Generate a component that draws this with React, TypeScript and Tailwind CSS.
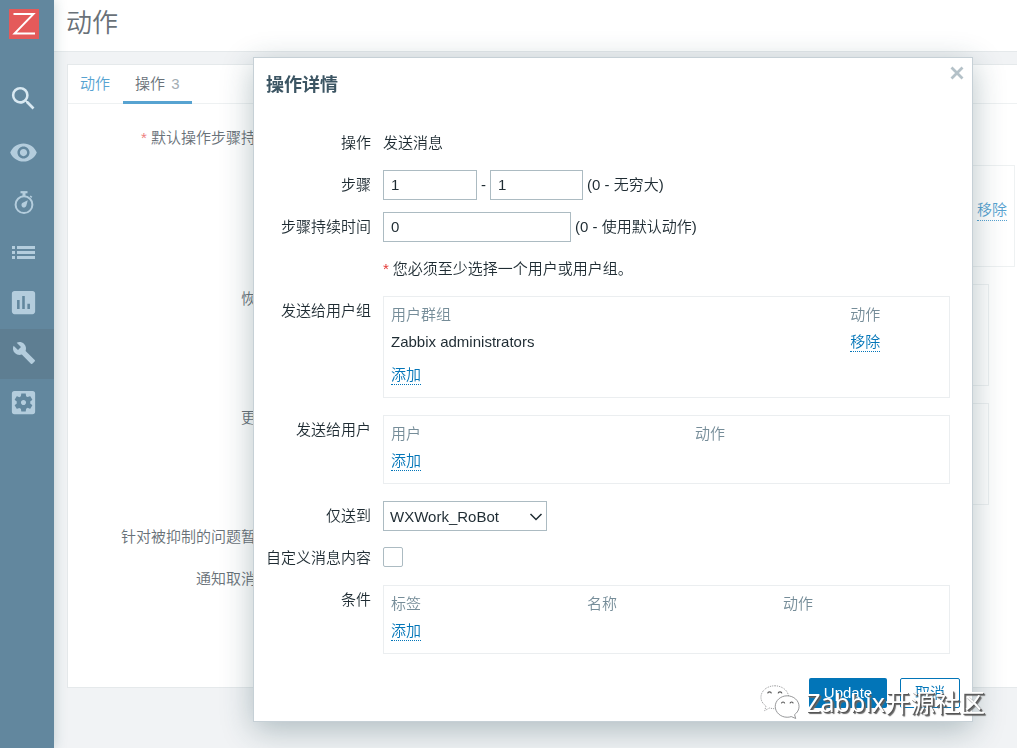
import React from 'react';
import {
  MdAssessment,
  MdBuild,
  MdRemoveRedEye,
  MdSearch,
  MdSettingsApplications
} from 'react-icons/md';

interface FormRowProps {
  label?: string;
  htmlFor?: string;
  children: React.ReactNode;
}

interface ListTableProps {
  columns: { title: string; className: string }[];
  children?: React.ReactNode;
}

const TimerIcon: React.FC = () => (
  <svg width="20" height="24" viewBox="0 0 20 24" fill="none" aria-hidden="true">
    <path d="M6.5 1.2h7" stroke="currentColor" strokeWidth="2.2" />
    <path d="M10 2v3" stroke="currentColor" strokeWidth="3" />
    <path d="M16.2 5l1.6 1.4" stroke="currentColor" strokeWidth="1.6" />
    <circle cx="10" cy="13.7" r="8.4" stroke="currentColor" strokeWidth="2" />
    <path d="M13.8 9.2l-1.5 5.6a2.5 2.5 0 1 1-3.6-3z" fill="currentColor" />
  </svg>
);

const ListIcon: React.FC = () => (
  <svg width="23" height="14" viewBox="0 0 23 14" fill="currentColor" aria-hidden="true">
    <path d="M0 0h3v3H0zM5 0h18v3H5zM0 5h3v3H0zM5 5h18v3H5zM0 10h3v3H0zM5 10h18v3H5z" />
  </svg>
);

const navItems = [
  { name: 'Monitoring', icon: <MdRemoveRedEye size={29} />, active: false },
  { name: 'Services', icon: <TimerIcon />, active: false },
  { name: 'Inventory', icon: <ListIcon />, active: false },
  { name: 'Reports', icon: <MdAssessment size={31} />, active: false },
  { name: 'Configuration', icon: <MdBuild size={24} />, active: true },
  { name: 'Administration', icon: <MdSettingsApplications size={31} />, active: false }
];

const Sidebar: React.FC = () => (
  <aside className="relative z-10 flex w-[54px] shrink-0 flex-col bg-[#62879e] text-[#b4cddd] shadow-[0_0_12px_rgba(40,90,100,0.25)]">
    <a href="#home" aria-label="Zabbix" className="mt-[9px] ml-[9px] block size-[30px]">
      <svg width="30" height="30" viewBox="0 0 30 30" aria-hidden="true">
        <path d="M0 0h30v30H0z" fill="#e45a5a" />
        <path d="M4.5 5h20L5.5 24.5H26" fill="none" stroke="#fff" strokeWidth="1.9" />
      </svg>
    </a>
    <button aria-label="Search" className="mt-[34px] flex h-[50px] w-[47px] items-center justify-center text-[#d9e9f2]">
      <MdSearch size={31} />
    </button>
    <nav className="mt-1.5">
      {navItems.map((item) => (
        <a
          key={item.name}
          href={`#${item.name.toLowerCase()}`}
          aria-label={item.name}
          className={`flex h-[50px] items-center justify-center pr-[7px] pb-[3px] ${item.active ? 'bg-[#5e7e92]' : ''}`}
        >
          {item.icon}
        </a>
      ))}
    </nav>
  </aside>
);

const ActionPage: React.FC = () => (
  <main className="flex min-w-0 flex-1 flex-col overflow-hidden bg-[#f1f3f5] text-[#697178]">
    <header className="flex h-[52px] items-center border-b border-[#e5e9eb] bg-white px-3 pb-1">
      <h1 className="text-[26px]">动作</h1>
    </header>
    <section className="mt-3 -mr-3 ml-[13px] border border-[#e5e9eb] bg-white pb-[93px]">
      <div className="flex h-[39px] gap-px border-b border-[#eef1f2]">
        <a href="#action" className="px-3 pt-1 leading-[30px] text-[#57a3d1]">动作</a>
        <a href="#operations" className="h-[39px] border-b-3 border-[#57a3d1] px-3 pt-1 leading-[30px]">
          操作 <span className="ml-0.5 text-[#a3adb3]">3</span>
        </a>
      </div>
      <div className="grid grid-cols-[233px_1fr] gap-x-3 gap-y-3 pt-[19px] pr-[13px] text-right leading-[30px] whitespace-nowrap">
        <div><span className="text-[#ee8080]">*</span> 默认操作步骤持续时间</div>
        <div />
        <div>操作</div>
        <div className="mb-[5px] flex h-[102px] items-center justify-end border border-[#eef1f2] pr-[7px] pb-3">
          <button className="border-b border-dotted border-[#57a3d1] leading-5 text-[#57a3d1]">移除</button>
        </div>
        <div>恢复操作</div>
        <div className="mr-[26px] mb-[5px] h-[102px] border border-[#eef1f2]" />
        <div>更新操作</div>
        <div className="mr-[26px] mb-[5px] h-[102px] border border-[#eef1f2]" />
        <div>针对被抑制的问题暂停操作</div>
        <div />
        <div>通知取消的升级</div>
        <div />
      </div>
    </section>
  </main>
);

const FormRow: React.FC<FormRowProps> = ({ label, htmlFor, children }) => (
  <>
    {htmlFor ? (
      <label htmlFor={htmlFor} className="text-right leading-[30px]">{label}</label>
    ) : (
      <div className="text-right leading-[30px]">{label}</div>
    )}
    <div className="flex min-h-[30px] items-start gap-1 leading-[30px]">{children}</div>
  </>
);

const LinkButton: React.FC<{ children: React.ReactNode }> = ({ children }) => (
  <button type="button" className="border-b border-dotted border-[#0275b8] leading-[19px] text-[#0275b8]">
    {children}
  </button>
);

const ListTable: React.FC<ListTableProps> = ({ columns, children }) => (
  <div className="mb-[5px] w-full border border-[#ebeef0] px-[7px] pt-1 pb-[9px]">
    <table className="w-full table-fixed text-left leading-[27px]">
      <thead>
        <tr className="text-[#768d99]">
          {columns.map((column) => (
            <th key={column.title} className={`p-0 font-[350] ${column.className}`}>{column.title}</th>
          ))}
        </tr>
      </thead>
      <tbody>{children}</tbody>
    </table>
  </div>
);

const inputClass = 'h-[30px] border border-[#acbbc2] bg-white px-[7px] outline-none';

const OperationDialog: React.FC = () => (
  <form
    role="dialog"
    aria-labelledby="dialog-title"
    className="w-full max-w-[720px] border border-[#c6d0d6] bg-white px-3 pb-[13px] shadow-[0_8px_30px_rgba(35,70,80,0.32)]"
  >
    <div className="flex items-start justify-between">
      <h2 id="dialog-title" className="pt-3 text-[18px] leading-[30px] font-bold text-[#3c5563]">操作详情</h2>
      <button type="button" aria-label="Close" className="-mr-1 pt-2 text-[#b4c1c8]">
        <svg width="14" height="14" viewBox="0 0 14 14" fill="none" aria-hidden="true">
          <path d="M1.5 1.5l11 11M12.5 1.5l-11 11" stroke="currentColor" strokeWidth="2.8" />
        </svg>
      </button>
    </div>

    <div className="mt-7 grid grid-cols-[105px_1fr] gap-3 pr-2.5">
      <FormRow label="操作">发送消息</FormRow>
      <FormRow label="步骤" htmlFor="step-from">
        <input id="step-from" defaultValue="1" className={`w-[94px] ${inputClass}`} />
        <span>-</span>
        <input aria-label="步骤" defaultValue="1" className={`w-[93px] ${inputClass}`} />
        <span>(0 - 无穷大)</span>
      </FormRow>
      <FormRow label="步骤持续时间" htmlFor="duration">
        <input id="duration" defaultValue="0" className={`w-[188px] ${inputClass}`} />
        <span>(0 - 使用默认动作)</span>
      </FormRow>
      <FormRow>
        <span className="text-[#e33734]">*</span>
        <span>您必须至少选择一个用户或用户组。</span>
      </FormRow>
      <FormRow label="发送给用户组">
        <ListTable columns={[{ title: '用户群组', className: 'w-5/6' }, { title: '动作', className: '' }]}>
          <tr>
            <td className="p-0">Zabbix administrators</td>
            <td className="p-0"><LinkButton>移除</LinkButton></td>
          </tr>
          <tr>
            <td colSpan={2} className="p-0 pt-1.5"><LinkButton>添加</LinkButton></td>
          </tr>
        </ListTable>
      </FormRow>
      <FormRow label="发送给用户">
        <ListTable columns={[{ title: '用户', className: 'w-[304px]' }, { title: '动作', className: '' }]}>
          <tr>
            <td colSpan={2} className="p-0"><LinkButton>添加</LinkButton></td>
          </tr>
        </ListTable>
      </FormRow>
      <FormRow label="仅送到" htmlFor="media">
        <div className="relative">
          <select id="media" className="block h-[30px] w-[164px] appearance-none border border-[#acbbc2] bg-white px-1.5">
            <option>WXWork_RoBot</option>
          </select>
          <svg className="pointer-events-none absolute top-3 right-1" width="14" height="8" viewBox="0 0 14 8" fill="none" aria-hidden="true">
            <path d="M1.5 1l5.5 5.5L12.5 1" stroke="#1f2c33" strokeWidth="1.5" />
          </svg>
        </div>
      </FormRow>
      <FormRow label="自定义消息内容" htmlFor="custom">
        <input id="custom" type="checkbox" className="mt-1 size-5 appearance-none rounded-xs border border-[#acbbc2] bg-white" />
      </FormRow>
      <FormRow label="条件">
        <ListTable
          columns={[
            { title: '标签', className: 'w-[196px]' },
            { title: '名称', className: 'w-[196px]' },
            { title: '动作', className: '' }
          ]}
        >
          <tr>
            <td colSpan={3} className="p-0"><LinkButton>添加</LinkButton></td>
          </tr>
        </ListTable>
      </FormRow>
    </div>

    <div className="mt-[19px] flex justify-end gap-[13px]">
      <button type="button" className="h-[30px] w-[78px] rounded-xs bg-[#0275b8] text-white">Update</button>
      <button type="button" className="h-[30px] w-[60px] rounded-xs border border-[#0275b8] bg-white text-[#0275b8]">取消</button>
    </div>
  </form>
);

const Watermark: React.FC = () => (
  <div className="pointer-events-none fixed right-8 bottom-7 z-30 flex items-center gap-1.5">
    <svg width="40" height="36" viewBox="0 0 42 36" fill="#fff" stroke="#77797b" strokeWidth="0.8" aria-hidden="true">
      <path d="M15.5 1C7.5 1 1 6.3 1 13c0 3.700 2 7 5.300 9.200L5 27l5-2.700c1.800.5 3.600.7 5.500.7 8 0 14.500-5.300 14.500-12S23.500 1 15.500 1z" strokeDasharray="1 1" />
      <path d="M28.5 11.500c-6.900 0-12.500 5-12.500 11.200S21.600 34 28.500 34c1.500 0 3-.2 4.300-.7l4.700 2-1.200-4c2.900-2.100 4.700-5.200 4.700-8.600 0-6.200-5.600-11.200-12.500-11.200z" />
      <path d="M8 9c.5-2.200 3.500-2.200 4 0M19 9c.5-2.200 3.500-2.200 4 0M22.5 19.500c.4-2 3-2 3.400 0M31.500 19.500c.4-2 3-2 3.400 0" fill="none" stroke="#555" strokeWidth="1.2" />
    </svg>
    <span className="text-[25px] leading-8 font-normal whitespace-nowrap text-white [font-family:'Noto_Sans','Noto_Sans_CJK_SC',sans-serif] [text-shadow:1px_1px_0_#555,2px_2px_1px_#666]">
      Zabbix开源社区
    </span>
  </div>
);

const App: React.FC = () => {
  return (
    <div className="flex min-h-screen text-[15px] font-[350] text-[#1f2c33] [font-family:'Liberation_Sans','Noto_Sans_CJK_SC',sans-serif]">
      <Sidebar />
      <ActionPage />
      <div className="fixed inset-0 z-20 overflow-hidden pt-[57px] pr-11 pl-[253px]">
        <OperationDialog />
      </div>
      <Watermark />
    </div>
  );
};

export default App;
